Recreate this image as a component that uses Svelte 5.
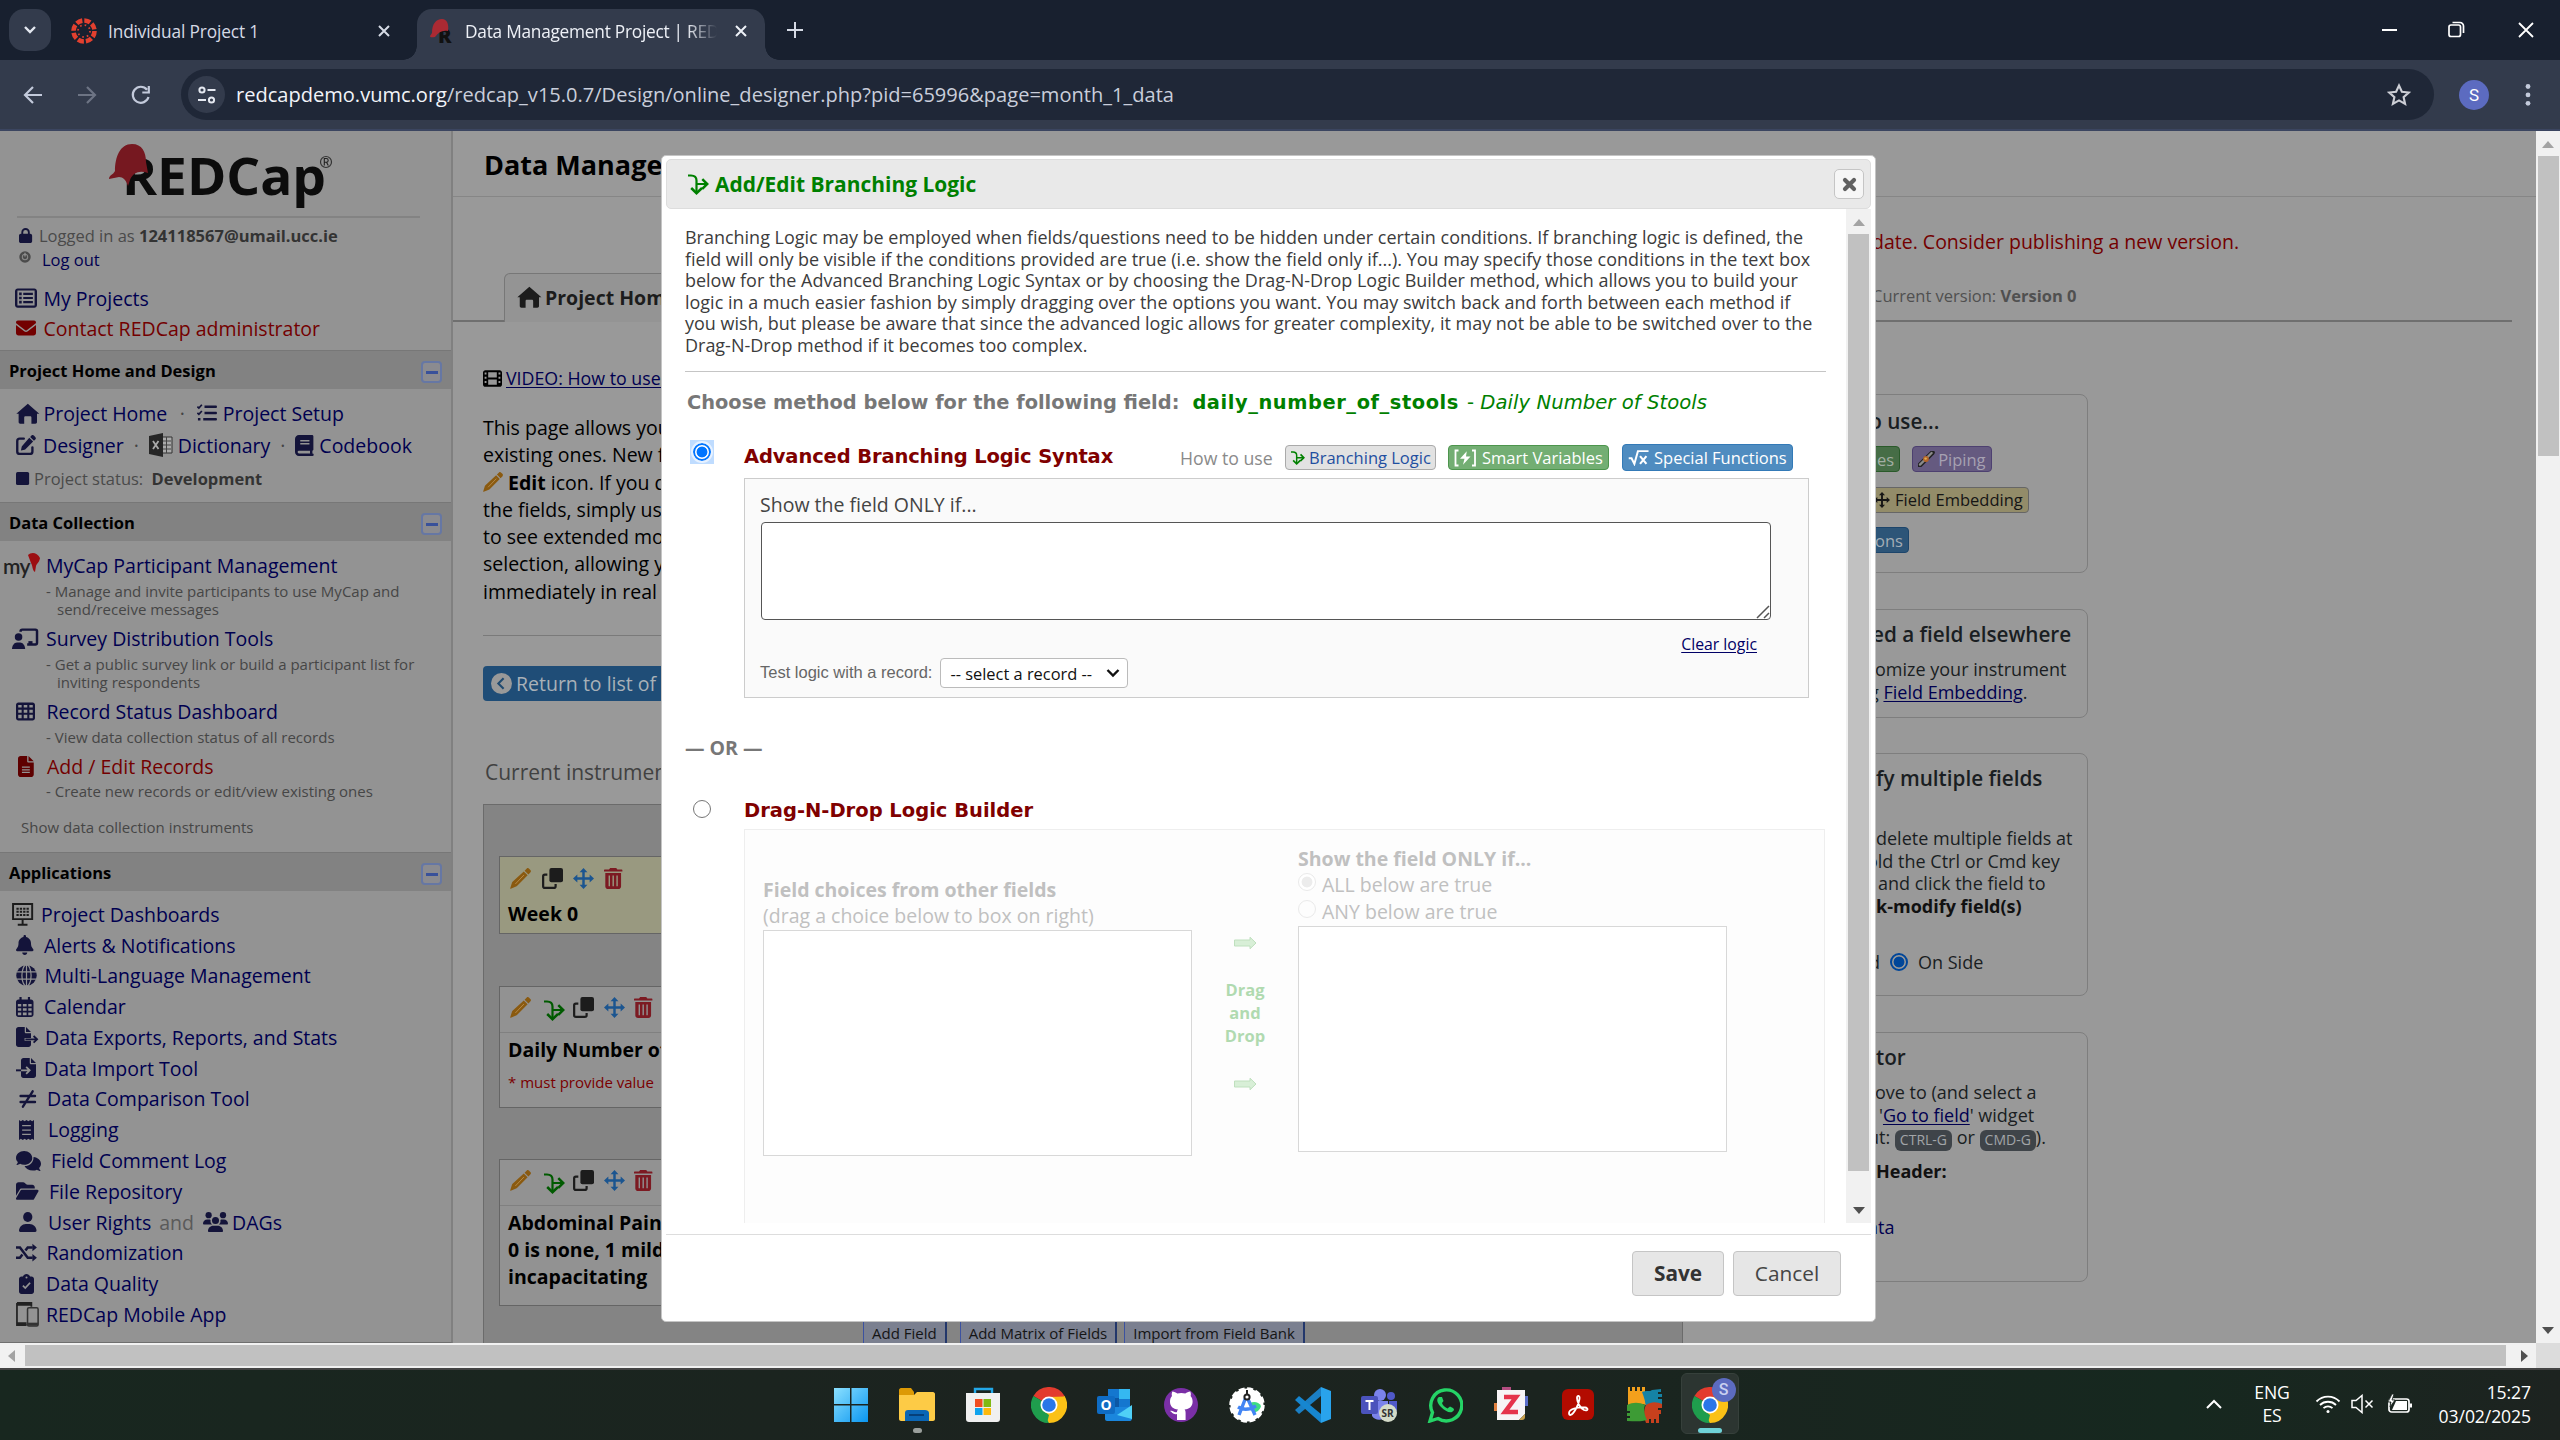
<script lang="ts">
  type Icon = [string, string];
  const icons: Record<string, Icon> = {
    home: ['0 0 576 512', '<path d="M288 16 8 262h56v202c0 22 16 40 40 40h96V352c0-18 12-30 30-30h116c18 0 30 12 30 30v152h96c24 0 40-18 40-40V262h56z"/>'],
    lock: ['0 0 448 512', '<path d="M80 192v-48a144 144 0 0 1 288 0v48h16c35 0 64 29 64 64v192c0 35-29 64-64 64H64c-35 0-64-29-64-64V256c0-35 29-64 64-64zm64 0h160v-48a80 80 0 0 0-160 0z"/>'],
    power: ['0 0 20 20', '<circle cx="10" cy="10" r="9.500" fill="#4b4b4b"/><circle cx="10" cy="10" r="4.500" fill="none" stroke="#888" stroke-width="1.800"/><path d="M9 3h2v6H9z" fill="#999"/>'],
    list: ['0 0 512 512', '<path fill-rule="evenodd" d="M64 32h384c35 0 64 29 64 64v320c0 35-29 64-64 64H64c-35 0-64-29-64-64V96c0-35 29-64 64-64zm-8 48v352h400V80zM96 130h60v60H96zm0 96h60v60H96zm0 96h60v60H96zm96-186h224v48H192zm0 96h224v48H192zm0 96h224v48H192z"/>'],
    mail: ['0 0 512 512', '<path d="M48 64h416c26 0 48 22 48 48 0 16-8 30-20 38L276 314c-12 9-28 9-40 0L20 150C8 142 0 128 0 112c0-26 22-48 48-48zM0 180l218 164c22 16 54 16 76 0l218-164v204c0 35-29 64-64 64H64c-35 0-64-29-64-64z"/>'],
    checks: ['0 0 512 512', '<path d="M192 64h288c18 0 32 14 32 32s-14 32-32 32H192zm0 160h288c18 0 32 14 32 32s-14 32-32 32H192zm-32 160h320c18 0 32 14 32 32s-14 32-32 32H160zM24 384h64v64H24z"/><path d="m10 92 38 38 76-86M10 252l38 38 76-86" fill="none" stroke="currentColor" stroke-width="44"/>'],
    edit: ['0 0 512 512', '<path d="M362 48 402 8c20-14 42-8 62 12l28 28c20 20 22 44 8 62l-40 38zM340 70l98 98-190 190c-8 8-18 14-30 17l-92 20 20-92c3-12 9-22 17-30z"/><path d="M200 92H96c-36 0-64 28-64 64v264c0 36 28 64 64 64h260c36 0 64-28 64-64V316" fill="none" stroke="currentColor" stroke-width="60" stroke-linecap="round"/>'],
    excel: ['0 0 24 24', '<path d="M12 4h11v16H12z" fill="#aaa" stroke="#333" stroke-width="1"/><path d="M13 8h9M13 12h9M13 16h9M17.500 4v16" stroke="#444" stroke-width="1"/><path d="M0 3 14 0v24L0 21z" fill="#262626"/><path d="m4 8 5.500 8M9.500 8 4 16" stroke="#aaa" stroke-width="1.800"/>'],
    book: ['0 0 448 512', '<path fill-rule="evenodd" d="M96 0h320c18 0 32 14 32 32v320c0 14-10 28-24 32v64a32 32 0 0 1 0 64H96c-53 0-96-43-96-96V96C0 43 43 0 96 0zm0 384a32 32 0 0 0 0 64h270v-64zM128 120v36h224v-36zm0 76v36h224v-36z"/>'],
    square: ['0 0 448 512', '<rect y="32" width="448" height="448" rx="56"/>'],
    teach: ['0 0 640 512', '<circle cx="160" cy="220" r="92"/><path d="M0 512c0-90 60-160 120-160h80c60 0 120 70 120 160z"/><path d="M210 90V80c0-22 18-40 40-40h320c22 0 40 18 40 40v280c0 22-18 40-40 40H370" fill="none" stroke="currentColor" stroke-width="60"/><path d="M400 320h100v70H400z"/>'],
    table: ['0 0 512 512', '<path fill-rule="evenodd" d="M64 16h384c35 0 64 29 64 64v352c0 35-29 64-64 64H64c-35 0-64-29-64-64V80c0-35 29-64 64-64zM60 84v66h92V84zm148 0v66h96V84zm152 0v66h92V84zM60 206v84h92v-84zm148 0v84h96v-84zm152 0v84h92v-84zM60 346v90h92v-90zm148 0v90h96v-90zm152 0v90h92v-90z"/>'],
    file: ['0 0 384 512', '<path fill-rule="evenodd" d="M64 0h160v128c0 18 14 32 32 32h128v288c0 35-29 64-64 64H64c-35 0-64-29-64-64V64C0 29 29 0 64 0zm192 0 128 128H256zM96 256v32h192v-32zm0 64v32h192v-32zm0 64v32h192v-32z"/>'],
    board: ['0 0 24 26', '<path fill="none" stroke="#1c1c1c" stroke-width="2.200" d="M1.200 1.200h21.600v17H1.200zM12 18v6M6.500 24.500h11"/><path d="M5 6.500h14M5 10h14M5 13.500h14" stroke="#1c1c1c" stroke-width="2.200" stroke-dasharray="2.600 1.200"/>'],
    bell: ['0 0 448 512', '<path d="M224 0c-18 0-32 14-32 32v19C119 66 64 130 64 208v19c0 47-17 92-48 127l-8 9c-8 9-10 22-5 33s16 21 29 21h384c13 0 24-10 29-21s3-24-5-33l-8-9c-31-35-48-80-48-127v-19c0-78-55-142-128-157V32c0-18-14-32-32-32zm45 493c12-12 19-28 19-45H160c0 17 7 33 19 45s28 19 45 19 33-7 45-19z"/>'],
    globe: ['0 0 512 512', '<circle cx="256" cy="256" r="250"/><path d="M0 170h512M0 342h512M256 0v512" fill="none" stroke="#939393" stroke-width="30"/><ellipse cx="256" cy="256" rx="112" ry="262" fill="none" stroke="#939393" stroke-width="30"/>'],
    cal: ['0 0 448 512', '<path fill-rule="evenodd" d="M88 0h56v64h160V0h56v64h24c35 0 64 29 64 64v320c0 35-29 64-64 64H64c-35 0-64-29-64-64V128c0-35 29-64 64-64h24zM48 180v66h86v-66zm128 0v66h96v-66zm138 0v66h86v-66zM48 288v66h86v-66zm128 0v66h96v-66zm138 0v66h86v-66zM48 396v68h86v-68zm128 0v68h96v-68zm138 0v68h86v-68z"/>'],
    exp: ['0 0 576 512', '<path d="M64 0h160v128c0 18 14 32 32 32h128v120H220v72h164v96c0 35-29 64-64 64H64c-35 0-64-29-64-64V64C0 29 29 0 64 0zm192 0 128 128H256z"/><path d="M240 316h290M450 230l90 86-90 86" fill="none" stroke="currentColor" stroke-width="46"/>'],
    imp: ['0 0 512 512', '<path d="M192 0h160v128c0 18 14 32 32 32h128v288c0 35-29 64-64 64H192c-35 0-64-29-64-64V64c0-35 29-64 64-64zm192 0 128 128H384z"/><path d="M0 316h130" stroke="currentColor" stroke-width="50"/><path d="M130 316h200M260 226l90 90-90 90" fill="none" stroke="#939393" stroke-width="46"/>'],
    neq: ['0 0 448 512', '<path d="M40 180h370M40 332h370M350 60 100 452" fill="none" stroke="currentColor" stroke-width="60" stroke-linecap="round"/>'],
    receipt: ['0 0 384 512', '<path fill-rule="evenodd" d="m0 0 48 34L96 0l48 34 48-34 48 34 48-34 48 34 48-34v512l-48-34-48 34-48-34-48 34-48-34-48 34-48-34-48 34zM80 130v32h224v-32zm0 110v32h224v-32zm0 110v32h224v-32z"/>'],
    chat: ['0 0 640 512', '<path d="M208 0c115 0 208 79 208 176S323 352 208 352c-38 0-74-9-105-24-20 14-58 32-98 32 20-20 38-52 43-78C18 252 0 216 0 176 0 79 93 0 208 0z"/><path d="M448 176c0 112-98 204-230 208 30 70 110 118 214 118 38 0 74-9 105-24 20 14 58 32 98 32-20-20-38-52-43-78 30-30 48-66 48-106 0-90-82-164-190-174 -1 8-2 16-2 24z"/>'],
    folder: ['0 0 576 512', '<path d="M90 230 0 380V96c0-35 29-64 64-64h118c17 0 33 7 45 19l26 26c12 12 28 19 45 19h118c35 0 64 29 64 64v32H144c-22 0-43 12-54 38zM120 236c6-8 14-14 24-14h400c12 0 22 6 28 16s6 22 0 32L460 464c-6 10-16 16-28 16H32c-12 0-22-6-28-16s-6-22 0-32z"/>'],
    user: ['0 0 448 512', '<ellipse cx="224" cy="128" rx="118" ry="128"/><path d="M178 304C80 304 0 384 0 482c0 16 14 30 30 30h388c16 0 30-14 30-30 0-98-80-178-178-178z"/>'],
    users: ['0 0 640 512', '<circle cx="144" cy="80" r="80"/><circle cx="512" cy="80" r="80"/><circle cx="320" cy="220" r="90"/><path d="M0 299c0-59 48-107 107-107h42c16 0 31 4 45 10-12 62 18 96 40 118H21c-12 0-21-9-21-21zM640 299c0-59-48-107-107-107h-42c-16 0-31 4-45 10 12 62-18 96-40 118h213c12 0 21-9 21-21zM128 485c0-74 60-133 133-133h118c74 0 133 60 133 133 0 15-12 27-27 27H155c-15 0-27-12-27-27z"/>'],
    shuffle: ['0 0 512 512', '<path d="M0 132h96l190 250h120M0 382h96l60-78M230 208l56-76h120" fill="none" stroke="currentColor" stroke-width="62"/><path d="m400 40 110 92-110 92zM400 290l110 92-110 92z"/>'],
    clip: ['0 0 384 512', '<path d="M192 0c-42 0-77 27-91 64H64c-35 0-64 29-64 64v320c0 35 29 64 64 64h256c35 0 64-29 64-64V128c0-35-29-64-64-64h-37C269 27 234 0 192 0z"/><circle cx="192" cy="92" r="26" fill="#939393"/><path d="m100 300 60 60 124-136" fill="none" stroke="#939393" stroke-width="46"/>'],
    mobile: ['0 0 24 26', '<path d="M1 1h15v4M1 1v23h10" fill="none" stroke="#222" stroke-width="1.800"/><path d="M1 2.500h15M1 22.500h10" stroke="#222" stroke-width="3"/><rect x="12" y="6" width="11" height="19" rx="1.500" fill="none" stroke="#333" stroke-width="1.600"/><path d="M12 23h11" stroke="#333" stroke-width="3"/>'],
    film: ['0 0 512 512', '<path fill-rule="evenodd" d="M64 32h384c35 0 64 29 64 64v320c0 35-29 64-64 64H64c-35 0-64-29-64-64V96c0-35 29-64 64-64zM44 96v54h50V96zm0 112v54h50v-54zm0 116v54h50v-54zm374-228v54h50V96zm0 112v54h50v-54zm0 116v54h50v-54zM140 90v138h232V90zm0 190v142h232V280z"/>'],
    pencil: ['0 0 512 512', '<path d="M410 10c20-14 42-8 56 6l30 30c16 16 20 40 4 60l-50 52-94-94zM336 84l94 94-260 262c-6 6-14 12-22 14L18 506c-10 2-16-4-12-14l42-132c2-8 8-16 14-22z"/><path d="M130 390 340 170" stroke="#b98d4d" stroke-width="22"/>'],
    copy: ['0 0 512 512', '<rect x="180" width="332" height="350" rx="50"/><path d="M130 160H70c-24 0-42 18-42 42v240c0 24 18 42 42 42h220c24 0 42-18 42-42v-50" fill="none" stroke="currentColor" stroke-width="54"/>'],
    move: ['0 0 512 512', '<path d="m256 0 96 106h-66v120h120v-66l106 96-106 96v-66H286v120h66l-96 106-96-106h66V286H106v66L0 256l106-96v66h120V106h-66z"/>'],
    trash: ['0 0 448 512', '<path fill-rule="evenodd" d="M150 0h148l28 34h106c9 0 16 8 16 16v36H0V50c0-8 7-16 16-16h106zM32 120h384v328c0 35-29 64-64 64H96c-35 0-64-29-64-64zm80 62v264h34V182zm95 0v264h34V182zm95 0v264h34V182z"/>'],
    branch: ['0 0 21 21', '<path d="M0 1.500h3c4 0 5.500 2 5.500 5V18M8.500 10H19" fill="none" stroke="currentColor" stroke-width="2.200"/><path d="m3.200 14 5.300 5.200 5.500-5.200M14.300 5.200 19.200 10l-4.900 4.800" fill="none" stroke="currentColor" stroke-width="2.500"/>'],
    bolt: ['0 0 30 24', '<path d="M6 2H2v20h4M24 2h4v20h-4" fill="none" stroke="currentColor" stroke-width="2.400"/><path d="M17 3 8 13h6l-2 8 10-11h-6z"/>'],
    root: ['0 0 30 24', '<path d="M1 13h4l4 8L14 3h15" fill="none" stroke="currentColor" stroke-width="2.800"/><path d="m17 10 9 11M26 10l-9 11" stroke="currentColor" stroke-width="3"/>'],
    pipe: ['0 0 20 20', '<path d="M2 18 18 2" stroke="#222" stroke-width="6" stroke-linecap="round"/><path d="M2.500 17 17 2.500" stroke="#8a8a8a" stroke-width="3" stroke-linecap="round"/><circle cx="10" cy="10" r="3.600" fill="#b5652a"/><circle cx="9.500" cy="9.500" r="1.500" fill="#e0b050"/>'],
    chev: ['0 0 20 20', '<circle cx="10" cy="10" r="10" fill="#999"/><path d="m12 5-5 5 5 5" fill="none" stroke="#1f4a70" stroke-width="2"/>'],
  };

  const apps: { t: string; i: string; h: number; w: number; cls?: string }[] = [
    { t: 'Project Dashboards', i: 'board', h: 23, w: 29, cls: 'out' },
    { t: 'Alerts & Notifications', i: 'bell', h: 20, w: 28 },
    { t: 'Multi-Language Management', i: 'globe', h: 21, w: 28.5 },
    { t: 'Calendar', i: 'cal', h: 20, w: 28 },
    { t: 'Data Exports, Reports, and Stats', i: 'exp', h: 20, w: 29 },
    { t: 'Data Import Tool', i: 'imp', h: 20, w: 28 },
    { t: 'Data Comparison Tool', i: 'neq', h: 20, w: 28, cls: 'in' },
    { t: 'Logging', i: 'receipt', h: 20, w: 29, cls: 'in' },
    { t: 'Field Comment Log', i: 'chat', h: 20, w: 35 },
    { t: 'File Repository', i: 'folder', h: 20, w: 33 },
    { t: 'User Rights', i: 'user', h: 20, w: 29, cls: 'in' },
    { t: 'Randomization', i: 'shuffle', h: 21, w: 30.5 },
    { t: 'Data Quality', i: 'clip', h: 20, w: 27, cls: 'in' },
    { t: 'REDCap Mobile App', i: 'mobile', h: 25, w: 30 },
  ];
</script>

{#snippet icon(name: string, h: number, w: number)}
  <svg class="ic {name}" width={w} height={h} viewBox={icons[name][0]} preserveAspectRatio="xMinYMid meet" fill="currentColor">{@html icons[name][1]}</svg>
{/snippet}

{#snippet chrome()}
  <svg viewBox="0 0 36 36" width="36" height="36">
    <path d="M18 18 2.400 9A18 18 0 0 1 33.600 9z" fill="#e33b2e" />
    <path d="M18 18 33.600 9A18 18 0 0 1 18 36z" fill="#fbc116" />
    <path d="M18 18v18A18 18 0 0 1 2.400 9z" fill="#1f9d4d" />
    <path d="M18 9.500h15.800L25.500 22z" fill="#fbc116" /><path d="M2.400 9H33.600L18 10z" fill="#e33b2e" />
    <path d="M10.500 22.500 18 36l7.500-13.500z" fill="#fbc116" /><path d="M3 9.500 10.500 22.500 18 28l-2 8A18 18 0 0 1 3 9.500z" fill="#1f9d4d" />
    <circle cx="18" cy="18" r="8.500" fill="#fff" /><circle cx="18" cy="18" r="6.800" fill="#2a76e8" />
  </svg>
{/snippet}

{#snippet arrow()}
  <svg width="23" height="14" viewBox="0 0 23 14"><path d="M.5 4h15.500V1.200L22 7l-6 5.800V10H.5z" fill="#d8efd7" stroke="#bfe0be" stroke-width="1" /></svg>
{/snippet}

{#snippet tools(branch: boolean)}
  <div class="tools">
    <span class="amber">{@render icon('pencil', 21, 32)}</span>
    {#if branch}<span class="green">{@render icon('branch', 21, 31)}</span>{/if}
    <span class="ink">{@render icon('copy', 21, 31)}</span>
    <span class="blue">{@render icon('move', 21, 30.5)}</span>
    <span class="red">{@render icon('trash', 21, 20)}</span>
  </div>
{/snippet}

<div class="screen">
  <header class="tabs">
    <div class="drop"><svg width="16" height="12" viewBox="0 0 16 12"><path d="m3 3 5 5 5-5" fill="none" stroke="#e4e8f0" stroke-width="2.400" /></svg></div>
    <div class="tab idle">
      <svg class="fav" width="26" height="26" viewBox="0 0 26 26"><circle cx="13" cy="13" r="10.500" fill="none" stroke="#e3402f" stroke-width="4.600" stroke-dasharray="6.200 2.050" /><circle cx="13" cy="13" r="6" fill="none" stroke="#e3402f" stroke-width="1.800" stroke-dasharray="1.600 3.110" /></svg>
      <span class="tt">Individual Project 1</span>
      <svg class="x" width="14" height="14" viewBox="0 0 14 14"><path d="m2 2 10 10M12 2 2 12" stroke="#d5dae5" stroke-width="2" /></svg>
    </div>
    <div class="tab active">
      <svg class="fav" width="26" height="26" viewBox="0 0 26 26"><text x="9" y="25" font-family="Open Sans, sans-serif" font-weight="800" font-size="20" fill="#111">R</text><path d="M3 15C3 6 7 1 13 1c5 0 7 5 6 12-6-1-9 1-13 6-2 0-5 1-5-1z" fill="#ab2a33" /></svg>
      <span class="tt fade">Data Management Project | RED</span>
      <svg class="x" width="14" height="14" viewBox="0 0 14 14"><path d="m2 2 10 10M12 2 2 12" stroke="#eef1f7" stroke-width="2" /></svg>
    </div>
    <svg class="plus" width="18" height="18" viewBox="0 0 18 18"><path d="M9 1v16M1 9h16" stroke="#d5dae5" stroke-width="2" /></svg>
    <div class="win">
      <svg class="min" width="16" height="16" viewBox="0 0 16 16"><path d="M0 8h15" stroke="#fff" stroke-width="2" /></svg>
      <svg width="17" height="17" viewBox="0 0 17 17" fill="none" stroke="#fff" stroke-width="1.700"><rect x="1" y="4" width="11.500" height="11.500" rx="2" /><path d="M4.500 1.500H12a3.500 3.500 0 0 1 3.500 3.500v7" /></svg>
      <svg width="16" height="16" viewBox="0 0 16 16"><path d="m1 1 14 14M15 1 1 15" stroke="#fff" stroke-width="1.800" /></svg>
    </div>
  </header>

  <div class="toolbar">
    <svg class="nav" width="20" height="20" viewBox="0 0 20 20" fill="none" stroke="#c3cadb" stroke-width="2.200"><path d="M19 10H2M10 2l-8 8 8 8" /></svg>
    <svg class="nav" width="20" height="20" viewBox="0 0 20 20" fill="none" stroke="#6d7484" stroke-width="2.200"><path d="M1 10h17M10 2l8 8-8 8" /></svg>
    <svg class="nav" width="20" height="20" viewBox="0 0 20 20" fill="none" stroke="#c3cadb" stroke-width="2.200"><path d="M17.500 12A8 8 0 1 1 16 4.700M17.800 1v6.500h-6.500" /></svg>
    <div class="omni">
      <div class="site"><svg width="20" height="20" viewBox="0 0 20 20" fill="none" stroke="#e4e8f0" stroke-width="2"><circle cx="5" cy="5" r="2.600" /><path d="M10.500 5h8M1 15h8" /><circle cx="14.500" cy="15" r="2.600" /></svg></div>
      <div class="url"><b>redcapdemo.vumc.org</b>/redcap_v15.0.7/Design/online_designer.php?pid=65996&amp;page=month_1_data</div>
      <svg class="star" width="24" height="24" viewBox="0 0 24 24"><path d="m12 2.500 2.900 6.300 6.900.7-5.200 4.600 1.500 6.800-6.100-3.500-6.100 3.500 1.500-6.800L2.200 9.500l6.900-.7z" fill="none" stroke="#cdcfd6" stroke-width="2.100" /></svg>
    </div>
    <div class="avatar">S</div>
    <svg class="dots" width="6" height="24" viewBox="0 0 6 24" fill="#c3cadb"><circle cx="3" cy="3.500" r="2.400" /><circle cx="3" cy="11.900" r="2.400" /><circle cx="3" cy="20.300" r="2.400" /></svg>
  </div>

  <div class="view">
    <aside>
      <div class="logo">
        <svg width="236" height="86" viewBox="0 0 236 86">
          <text x="23" y="64" font-family="Open Sans, sans-serif" font-weight="700" font-size="52.500" textLength="204" lengthAdjust="spacingAndGlyphs" fill="#0c0c0c">REDCap</text>
          <path d="M16 40C16 26 21 13 33 13c10 0 14 8 14 18l2 11c-8-3-15-1-18 7l-2 6c-2-6-5-9-9-9l-10 2c0-4 4-4 6-8z" fill="#761820" />
          <circle cx="227" cy="31" r="5.500" fill="none" stroke="#333" stroke-width="1.200" /><path d="M225.300 34.500v-7h2a1.900 1.900 0 0 1 0 3.800h-2m2.200 0 1.800 3.200" fill="none" stroke="#222" stroke-width="1.100" />
        </svg>
      </div>
      <div class="who"><span class="ic-navy">{@render icon('lock', 15, 20)}</span>Logged in as <b>124118567@umail.ucc.ie</b></div>
      <div class="logout">{@render icon('power', 12, 23)}<a>Log out</a></div>
      <div class="link first"><span class="navy">{@render icon('list', 22, 28.5)}</span>My Projects</div>
      <div class="link warn">{@render icon('mail', 20, 27.5)}Contact REDCap administrator</div>

      <div class="head one">Project Home and Design<i></i></div>
      <div class="line r1"><span class="navy">{@render icon('home', 21, 27.5)}</span>Project Home<u>·</u><span class="navy">{@render icon('checks', 20, 25.5)}</span>Project Setup</div>
      <div class="line r2"><span class="navy">{@render icon('edit', 20, 27)}</span>Designer<u>·</u>{@render icon('excel', 24, 29)}Dictionary<u>·</u><span class="navy">{@render icon('book', 21, 24)}</span>Codebook</div>
      <div class="status"><span class="navy">{@render icon('square', 15, 18)}</span>Project status: <b>Development</b></div>

      <div class="head two">Data Collection<i></i></div>
      <div class="big my"><em>my</em><svg width="12" height="20" viewBox="0 0 12 20"><path d="M0 2c3-3 9-3 12 3-1 5-3 5-4 8l-1 6C4 17 5 13 3 10z" fill="#9c0f12" /></svg>MyCap Participant Management</div>
      <p class="sub">- Manage and invite participants to use MyCap and<br />send/receive messages</p>
      <div class="big teachrow">{@render icon('teach', 21, 34)}Survey Distribution Tools</div>
      <p class="sub">- Get a public survey link or build a participant list for<br />inviting respondents</p>
      <div class="big">{@render icon('table', 19, 30.5)}Record Status Dashboard</div>
      <p class="sub">- View data collection status of all records</p>
      <div class="big warn">{@render icon('file', 21, 29)}Add / Edit Records</div>
      <p class="sub last">- Create new records or edit/view existing ones</p>
      <p class="show">Show data collection instruments</p>

      <div class="head three">Applications<i></i></div>
      <div class="apps">
        {#each apps as a}
          <div class="app {a.cls ?? ''}"><span class="navy">{@render icon(a.i, a.h, a.w)}</span>{a.t}{#if a.i === 'user'}<s>and</s><span class="navy">{@render icon('users', 20, 29)}</span>DAGs{/if}</div>
        {/each}
      </div>
    </aside>

    <main>
      <div class="phead">Data Management Project</div>
      <div class="tabline">
        <div class="ptab">{@render icon('home', 22, 28)}Project Home</div>
      </div>
      <div class="cols">
        <div class="left">
          <div class="video">{@render icon('film', 19, 23)}<a>VIDEO: How to use this page</a></div>
          <p class="intro">This page allows you to build<br />existing ones. New fields may<br /><span class="amber">{@render icon('pencil', 20, 25)}</span><b>Edit</b> icon. If you decide<br />the fields, simply use it<br />to see extended modes<br />selection, allowing you<br />immediately in real time</p>
          <div class="back">{@render icon('chev', 21, 25)}Return to list of instruments</div>
          <h4>Current instrument:</h4>
          <div class="panel">
            <div class="fcard yellow">{@render tools(false)}<b>Week 0</b></div>
            <div class="fcard two">{@render tools(true)}<b>Daily Number of Stools</b><small>* must provide value</small></div>
            <div class="fcard three">{@render tools(true)}<b>Abdominal Pain Score<br />0 is none, 1 mild and 3 is<br />incapacitating</b></div>
            <div class="adds"><span>Add Field</span><span>Add Matrix of Fields</span><span>Import from Field Bank</span></div>
          </div>
        </div>
        <div class="right">
          <p class="stale">date. Consider publishing a new version.</p>
          <p class="ver">Current version: <b>Version 0</b></p>
          <section class="c1">
            <h3>to use...</h3>
            <div class="bl"><span class="bg g">es</span><span class="bg p">{@render icon('pipe', 16, 20)}Piping</span></div>
            <div class="bl"><span class="bg y">{@render icon('move', 16, 21)}Field Embedding</span></div>
            <div class="bl"><span class="bg b">ons</span></div>
          </section>
          <section class="c2"><h3>ed a field elsewhere</h3><p>omize your instrument<br /><span class="pull">g <a>Field Embedding</a>.</span></p></section>
          <section class="c3"><h3>fy multiple fields</h3><p>delete multiple fields at<br /><span class="pull9">old the Ctrl or Cmd key</span><br /><span class="nudge">and click the field to</span><br /><b>k-modify field(s)</b></p>
            <div class="pos"><span>d</span><span class="radio dark"></span>On Side</div></section>
          <section class="c4"><h3>tor</h3><p>ove to (and select a<br /><span class="nudge2">'<a>Go to field</a>' widget</span><br /><span class="pull8">ut: <kbd>CTRL-G</kbd> or <kbd>CMD-G</kbd>).</span></p><p class="hd"><b>Header:</b></p><p class="ata">ata</p></section>
        </div>
      </div>
    </main>
    <div class="vbar"><span class="up"></span><span class="thumb"></span><span class="down"></span></div>
  </div>
  <div class="hbar"><span class="la"></span><span class="thumb"></span><span class="ra"></span><span class="corner"></span></div>

  <footer>
    <div class="icons">
      <div><svg width="36" height="36" viewBox="0 0 36 36"><defs><linearGradient id="w" x1="0" y1="0" x2="1" y2="1"><stop offset="0" stop-color="#8be0ff" /><stop offset="1" stop-color="#0a96f0" /></linearGradient></defs><path d="M1 1h16v16H1zM18.500 1H35v16H18.500zM1 18.500h16V35H1zM18.500 18.500H35V35H18.500z" fill="url(#w)" /></svg></div>
      <div class="run"><svg width="36" height="36" viewBox="0 0 36 36"><path d="M0 3c0-1 1-2 2-2h10l3 4v6H0z" fill="#dd9a05" /><path d="M0 8h15l3-3h16c1 0 2 1 2 2v25c0 1-1 2-2 2H2c-1 0-2-1-2-2z" fill="#fdcb46" /><path d="M6 34V26c0-2 1-3 3-3h17c2 0 4 1 4 3v8z" fill="#0b66b5" /><path d="M10 28h15" stroke="#06407a" stroke-width="2" /></svg></div>
      <div><svg width="36" height="36" viewBox="0 0 36 36"><path d="M10 8V2h17v6" fill="none" stroke="#23a8e8" stroke-width="2.400" /><path d="M1 6h34v26c0 2-1 3-3 3H4c-2 0-3-1-3-3z" fill="#f0f0f0" /><path d="M10 12h7.500v8H10z" fill="#f04e23" /><path d="M18.500 12H26v8h-7.500z" fill="#80b913" /><path d="M10 21h7.500v7H10z" fill="#10a3ee" /><path d="M18.500 21H26v7h-7.500z" fill="#fdb90d" /></svg></div>
      <div>{@render chrome()}</div>
      <div><svg width="36" height="36" viewBox="0 0 36 36"><path d="M11 2h22v26H11z" fill="#1477cf" /><path d="M22 2h11v10H22z" fill="#35b8f1" /><path d="M11 11h11v10H11z" fill="#0c57a5" /><path d="M8 20h27v11c0 2-1 3-2 3H10c-1 0-2-1-2-2z" fill="#1a86dd" /><path d="m20 28 15-10v14z" fill="#4fd0f7" /><rect y="9" width="18" height="18" rx="2" fill="#0f6cc4" /><text x="3.500" y="23" font-family="Open Sans, sans-serif" font-weight="700" font-size="14" fill="#fff">O</text></svg></div>
      <div><svg width="36" height="36" viewBox="0 0 36 36"><circle cx="18" cy="18" r="17" fill="#7a2fa6" /><path d="M14 33v-6c-4 1-5-2-7-3 3-1 4 2 7 1 0-1 .5-2 1-2.500-5-.6-8-3-8-8 0-2 .6-4 2-5.500-.5-1.500-.3-3 .3-4.500 2 0 3.500 1 5 2a15 15 0 0 1 8 0c1.500-1 3-2 5-2 .6 1.500.8 3 .3 4.500 1.400 1.500 2 3.500 2 5.500 0 5-3 7.400-8 8 .8.800 1 2 1 3.500V33z" fill="#fff" /></svg></div>
      <div><svg width="36" height="36" viewBox="0 0 36 36"><circle cx="18" cy="18" r="16.500" fill="#fff" stroke="#fff" stroke-width="2.500" stroke-dasharray="6 2.600" /><path d="M21 16c4-2 9-1 11 3-1 4-4 6-8 7z" fill="#3ddc84" /><path d="M17 10 10 28M18 10l8 18M9 20q8 5 18-1" fill="none" stroke="#4285f4" stroke-width="3.400" /><circle cx="18" cy="10" r="2.600" fill="#fff" stroke="#222" stroke-width="2" /><path d="M18 3v5" stroke="#222" stroke-width="2" /></svg></div>
      <div><svg width="36" height="36" viewBox="0 0 36 36"><path d="M26 0 36 4v28l-10 4z" fill="#29a3ec" /><path d="M26 0v9L4 27l-4-4z" fill="#1b7fc4" /><path d="M26 36v-9L4 9l-4 4z" fill="#1686d0" /></svg></div>
      <div><svg width="36" height="36" viewBox="0 0 36 36"><circle cx="19" cy="8" r="6" fill="#7b83eb" /><circle cx="30" cy="9" r="4" fill="#5059c9" /><path d="M11 14h16v12a9 9 0 0 1-16 3z" fill="#7b83eb" /><path d="M28 14h8v9a6 6 0 0 1-8 3z" fill="#5059c9" /><rect y="9" width="17" height="18" rx="2" fill="#4b53bc" /><path d="M4.500 14h8M8.500 14v9" stroke="#fff" stroke-width="2" /><circle cx="27" cy="26" r="9" fill="#d4dbc8" /><text x="20.500" y="30" font-family="Open Sans, sans-serif" font-weight="700" font-size="10" fill="#333">SR</text></svg></div>
      <div><svg width="36" height="36" viewBox="0 0 36 36"><path d="M3 34 5.500 25.500A15.500 15.500 0 1 1 11 31.500z" fill="none" stroke="#25d366" stroke-width="3.400" /><path d="M12 10c-3 2-2 6 2 10s8 6 11 5c3-2 2-3 1-4l-3-1.500-2.500 2c-3-1.500-5-3.500-5.500-5.500l1.500-2L15 10z" fill="#25d366" /></svg></div>
      <div><svg width="36" height="36" viewBox="0 0 36 36"><path d="M9 0h9v6H9z" fill="#b34d80" /><path d="M30 9h5v10h-5z" fill="#5b6ec8" /><path d="M1 16h5v8H1z" fill="#e08040" /><path d="M4 3h28v24l-6 6H4z" fill="#f7f4f6" /><path d="m26 33 6-6v3c0 2-1 3-3 3z" fill="#c9a04c" /><path d="M11 10h12L12 25h13" fill="none" stroke="#e5344c" stroke-width="4.600" /></svg></div>
      <div><svg width="36" height="36" viewBox="0 0 36 36"><rect x="2" y="2" width="32" height="31" rx="6" fill="#b30b00" /><path d="M9 26c0-4 8-6 16-5.500 4 .5 3 4-1 2.500-4-2-7-8-7-12 0-3 3-3 2.500 1C19 17 14 27 10.500 28 9 28 9 27 9 26z" fill="none" stroke="#fff" stroke-width="1.800" /></svg></div>
      <div><svg width="36" height="36" viewBox="0 0 36 36"><path d="M2 0h2v4h2V0h3v4h2V0h3v4h2V0h3v6l1 12c-6-2-13-1-18 4z" fill="#f3a01c" /><path d="M16 5c4-2 8 0 10-2l9-1v3h-3v2h4v3h-4v2h4v6c-6-3-12-1-16 4 0-6-2-12-4-17z" fill="#1583a5" /><path d="M20 18c6-4 11-3 16-1v4h-4v2h3v4h-2v9h-3v-4h-2v4h-3v-4h-2v4h-3c-2-6-3-12 0-18z" fill="#c8401d" /><path d="M1 18c6-3 12-3 18 0-2 5 0 11 2 15-6 2-13 1-20 1v-3h3v-2H1v-3h3v-2H1z" fill="#3d9b35" /></svg></div>
      <div class="cur">{@render chrome()}<span class="badge">S</span></div>
    </div>
    <div class="tray">
      <svg width="18" height="12" viewBox="0 0 18 12"><path d="m2 10 7-7 7 7" fill="none" stroke="#fff" stroke-width="2" /></svg>
      <div class="lang">ENG<br />ES</div>
      <svg class="wifi" width="26" height="20" viewBox="0 0 26 20" fill="none" stroke="#fff" stroke-width="1.800"><path d="M1.500 7.500a16 16 0 0 1 23 0M5 11a11.500 11.500 0 0 1 16 0M8.500 14.200a6.500 6.500 0 0 1 9 0" /><circle cx="13" cy="17.500" r="1.500" fill="#fff" stroke="none" /></svg>
      <svg class="vol" width="24" height="20" viewBox="0 0 24 20" fill="none" stroke="#fff" stroke-width="1.500"><path d="M1 6.500h4L11 1.500v17L5 13.500H1zM14.500 6.500l7 7M21.500 6.500l-7 7" /></svg>
      <svg width="26" height="20" viewBox="0 0 26 20"><rect x="2" y="5" width="20" height="13" rx="2.500" fill="none" stroke="#fff" stroke-width="1.700" /><path d="M9 7h11v9H5z" fill="#fff" /><path d="M22.500 9.500H25v4h-2.500z" fill="#fff" /><path d="M5 0 1 8h3l-1 5 5-7H5l2-6z" fill="#fff" stroke="#1b241f" stroke-width=".8" /></svg>
      <div class="clock">15:27<br />03/02/2025</div>
    </div>
  </footer>

  <div class="dialog">
    <div class="title"><span class="green">{@render icon('branch', 21, 27)}</span>Add/Edit Branching Logic
      <div class="close"><svg width="15" height="15" viewBox="0 0 15 15"><path d="m3 3 9 9M12 3l-9 9" stroke="#606060" stroke-width="4.200" stroke-linecap="round" /></svg></div></div>
    <div class="scroll">
      <div class="body">
        <p class="desc">Branching Logic may be employed when fields/questions need to be hidden under certain conditions. If branching logic is defined, the<br />field will only be visible if the conditions provided are true (i.e. show the field only if...). You may specify those conditions in the text box<br />below for the Advanced Branching Logic Syntax or by choosing the Drag-N-Drop Logic Builder method, which allows you to build your<br />logic in a much easier fashion by simply dragging over the options you want. You may switch back and forth between each method if<br />you wish, but please be aware that since the advanced logic allows for greater complexity, it may not be able to be switched over to the<br />Drag-N-Drop method if it becomes too complex.</p>
        <div class="rule"></div>
        <div class="choose"><b>Choose method below for the following field:</b><b class="fld">daily_number_of_stools</b><span>- <i>Daily Number of Stools</i></span></div>
        <div class="method m1">
          <div class="pick"><span class="focus"><span class="radio"></span></span></div>
          <div class="col">
            <div class="mhead"><b>Advanced Branching Logic Syntax</b><span class="how">How to use</span>
              <span class="btn bgray"><span class="green">{@render icon('branch', 14, 18)}</span>Branching Logic</span>
              <span class="btn bgreen">{@render icon('bolt', 18, 28)}Smart Variables</span>
              <span class="btn bblue">{@render icon('root', 17, 26)}Special Functions</span></div>
            <div class="box">
              <div class="only">Show the field ONLY if...</div>
              <div class="area"><svg width="14" height="14" viewBox="0 0 14 14"><path d="M1 13 13 1M8 13l5-5" stroke="#555" stroke-width="1.500" /></svg></div>
              <div class="clear"><a>Clear logic</a></div>
              <div class="test">Test logic with a record:<div class="select">-- select a record --<svg width="14" height="10" viewBox="0 0 14 10"><path d="m1.500 2 5.500 5.500L12.500 2" fill="none" stroke="#111" stroke-width="2.400" /></svg></div></div>
            </div>
          </div>
        </div>
        <div class="or">— OR —</div>
        <div class="method m2">
          <div class="pick"><span class="radio off"></span></div>
          <div class="col">
            <div class="mhead"><b>Drag-N-Drop Logic Builder</b></div>
            <div class="box2">
              <div class="ch"><b>Field choices from other fields</b><span>(drag a choice below to box on right)</span><div class="drop2"></div></div>
              <div class="mid">{@render arrow()}<b>Drag<br />and<br />Drop</b>{@render arrow()}</div>
              <div class="rt"><b>Show the field ONLY if...</b><span><i class="r on"></i>ALL below are true</span><span><i class="r"></i>ANY below are true</span><div class="drop2"></div></div>
            </div>
          </div>
        </div>
      </div>
      <div class="dbar"><span class="up"></span><span class="thumb"></span><span class="down"></span></div>
    </div>
    <div class="foot"><span class="save">Save</span><span>Cancel</span></div>
  </div>
</div>

<style>
  :global(body) { margin: 0; background: #999; }
  * { box-sizing: border-box; }
  .screen { position: relative; width: 2560px; height: 1440px; overflow: hidden; display: flex; flex-direction: column; font-family: 'Open Sans', 'Noto Sans', sans-serif; font-size: 19.5px; color: #000; white-space: nowrap; }
  p, h3, h4 { margin: 0; font-weight: 400; }
  .ic { display: block; flex: none; }
  a { color: #000050; text-decoration: underline; text-underline-offset: 2px; text-decoration-thickness: 1px; }
  .navy, .ic-navy { color: #14143a; }
  .green { color: #008000; }

  .tabs { height: 60px; background: #18202f; display: flex; align-items: flex-start; flex: none; }
  .drop { width: 42px; height: 42px; margin: 9px 0 0 9px; border-radius: 15px; background: #333b4c; display: flex; align-items: center; justify-content: center; }
  .tab { height: 51px; margin-top: 9px; display: flex; align-items: center; padding-bottom: 7px; color: #d5dae5; font-size: 17.3px; letter-spacing: -.13px; }
  .idle { width: 366px; padding-left: 20px; }
  .active { position: relative; width: 348px; padding-left: 12px; background: #333b4c; border-radius: 15px 15px 0 0; color: #eef1f7; letter-spacing: -.25px; }
  .active::before, .active::after { content: ''; position: absolute; bottom: 0; width: 14px; height: 14px; background: radial-gradient(circle at 0 0, transparent 13.500px, #333b4c 14px); left: -14px; }
  .active::after { left: auto; right: -14px; background: radial-gradient(circle at 100% 0, transparent 13.500px, #333b4c 14px); }
  .fav { margin-right: 11px; }
  .idle .tt { flex: 1; }
  .idle .x { margin-right: 26px; }
  .fade { width: 252px; overflow: hidden; -webkit-mask-image: linear-gradient(90deg, #000 88%, transparent); }
  .active .x { margin-left: 17px; }
  .active .fav { margin-right: 10px; }
  .plus { margin: 21px 0 0 21px; }
  .win { margin: 21px 26px 0 auto; display: flex; gap: 53px; align-items: center; }
  .min { margin-right: -3px; }

  .toolbar { height: 71px; flex: none; background: #333b4c; display: flex; align-items: center; border-bottom: 2px solid #3b4560; }
  .nav { margin: 0 11px 0 23px; }
  .toolbar .nav + .nav { margin-left: 23px; }
  .omni { flex: 1; height: 51px; margin: 0 25px 0 19px; border-radius: 26px; background: #1f2737; display: flex; align-items: center; padding: 0 23px 0 7px; }
  .site { width: 37px; height: 37px; border-radius: 50%; background: #333b4c; display: flex; align-items: center; justify-content: center; }
  .url { margin-left: 11px; flex: 1; color: #c9cedb; font-size: 20.06px; }
  .url b { font-weight: 400; color: #f2f4f9; }
  .avatar { width: 30px; height: 30px; border-radius: 50%; background: #5c6bc0; color: #fff; font: 17px/30px Roboto, sans-serif; text-align: center; }
  .dots { margin: 0 29px 0 36px; }

  .view { height: 1212px; flex: none; display: flex; background: #999; overflow: hidden; }
  aside { width: 453px; flex: none; background: #939393; border-right: 2px solid #808080; border-bottom: 1px solid #6f6f6f; color: #000050; display: flex; flex-direction: column; }
  .logo { height: 87px; margin: 0 31px 0 17px; border-bottom: 2px solid #838383; padding-left: 82px; }
  .who { height: 24px; margin-top: 5px; padding-left: 19px; display: flex; align-items: center; font-size: 16.5px; color: #4a4a4a; white-space: pre; }
  .who b { color: #333; }
  .logout { height: 24px; padding-left: 19px; display: flex; align-items: center; font-size: 16.5px; }
  .logout a { text-decoration: none; }
  .logout .ic { margin-top: -5px; }
  .link { height: 30px; display: flex; align-items: center; padding-left: 15px; }
  .link.first { margin-top: 12px; }
  .link.warn { padding-left: 16px; }
  .warn { color: #730000; }
  .head { height: 39px; border-top: 1px solid #777; background: #828282; color: #000; font-weight: 700; font-size: 16.5px; display: flex; align-items: center; justify-content: space-between; padding: 0 9px 0 9px; }
  .head i { width: 21px; height: 22px; margin-top: 4px; border: 2px solid #6677a4; border-radius: 4px; background: linear-gradient(#39519a, #39519a) center/12px 3px no-repeat, #8b8b90; }
  .one { margin-top: 7px; }
  .line { height: 30px; display: flex; align-items: center; padding-left: 16px; }
  .line u { text-decoration: none; width: 30px; text-align: center; color: #444; }
  .r1 { margin-top: 9px; }
  .r2 { margin-top: 2px; }
  .line.r2 u { width: 25px; }
  .status { margin-top: 6px; height: 24px; display: flex; align-items: center; padding-left: 16px; font-size: 16.5px; color: #4a4a4a; white-space: pre; }
  .status b { color: #333; margin-left: 4px; }
  .two.head { margin-top: 12px; }
  .big { height: 30px; display: flex; align-items: center; padding-left: 16px; margin-top: 5px; }
  .big .ic { color: #14143a; }
  .big.warn { margin-top: 5px; padding-left: 18px; }
  .big.warn .ic { color: #5e0000; }
  .big.teachrow { padding-left: 12px; }
  .big.my { margin-top: 9px; padding-left: 3px; }
  .my em { font: 600 21px/1 Lato, sans-serif; color: #222; letter-spacing: -.6px; }
  .my svg { margin: -4px 6px 0 -2px; }
  .sub { margin-top: 2px; padding-left: 57px; text-indent: -11px; font-size: 15px; line-height: 18px; color: #464646; }
  .sub.last { margin-top: 1px; }
  .show { margin-top: 18px; padding-left: 21px; font-size: 15px; line-height: 18px; color: #464646; }
  .three.head { margin-top: auto; }
  .apps { height: 439px; padding-top: 8px; margin-bottom: 12px; }
  .app { height: 30.77px; display: flex; align-items: center; padding-left: 16px; }
  .app.out { padding-left: 12px; }
  .app.in { padding-left: 19px; }
  .app s { text-decoration: none; color: #5a5a5a; margin: 0 9px 0 8px; }

  main { width: 2083px; flex: none; overflow: hidden; }
  .phead { height: 66px; border-bottom: 1px solid #868686; padding-left: 31px; font: 700 27px/68px 'Open Sans', sans-serif; }
  .tabline { height: 125px; display: flex; align-items: flex-end; border-bottom: 2px solid #6f6f6f; margin-right: 24px; }
  .ptab { height: 49px; margin: 0 0 -2px 51px; width: 260px; border: 1px solid #777; border-bottom: 0; border-radius: 6px 6px 0 0; background: #949494; padding: 0 0 2px 12px; display: flex; align-items: center; font-weight: 700; color: #1c1c1c; }
  .cols { display: flex; padding-left: 30px; }
  .left { width: 1200px; flex: none; }
  .video { height: 26px; margin-top: 43px; display: flex; align-items: center; font-size: 17.8px; }
  .intro { margin-top: 23px; line-height: 27.3px; }
  .intro span { display: inline-block; vertical-align: -2px; }
  .amber { color: #8a5a10; }
  .back { position: relative; margin-top: 61px; width: 300px; height: 35px; border-radius: 4px; background: #1f4d77; color: #a9b1b8; display: flex; align-items: center; padding-left: 8px; }
  .back::before { content: ''; position: absolute; left: 0; top: -31px; width: 1100px; height: 1px; background: #7a7a7a; }
  h4 { margin-top: 55px; font-size: 21px; line-height: 32px; color: #414141; padding-left: 2px; }
  .panel { margin-top: 16px; height: 560px; background: #848484; border: 1px solid #6b6b6b; padding: 51px 15px 0; }
  .fcard { background: #929292; border: 1px solid #656565; padding-left: 8px; line-height: 27px; width: 1100px; }
  .fcard b { display: block; }
  .fcard small { display: block; font-size: 15px; line-height: 20px; margin-top: 9px; color: #7a0000; }
  .yellow { height: 78px; background: #999980; }
  .tools { display: flex; align-items: center; height: 46px; margin: 0 0 0 -8px; padding-left: 10px; }
  .yellow .tools { height: 43px; }
  .fcard.two { height: 122px; margin-top: 52px; }
  .fcard.two .tools, .fcard.three .tools { height: 46px; border-bottom: 1px solid #808080; padding-bottom: 4px; }
  .fcard.two > b, .fcard.three > b { margin-top: 3px; }
  .fcard.three { height: 147px; margin-top: 51px; }
  .tools .green { color: #005a00; padding: 5px 0 0 2px; margin-right: -2.5px; }
  .ink { color: #1c1c1c; }
  .tools .blue { color: #1b5590; }
  .tools .red { color: #7c1a22; }
  .adds { display: flex; margin: 14px 0 0 364px; }
  .adds span { height: 30px; padding: 2px 8px 0 8px; background: #7b8090; border-left: 1px solid #3c52a0; border-right: 2px solid #23376b; font-size: 15px; line-height: 23px; color: #151515; margin-right: 13px; }
  .adds span:nth-child(2) { margin-right: 7px; }

  .right { margin-top: -81px; flex: 1; padding-left: 188px; color: #1a1e22; font-size: 18px; }
  .stale { margin-top: -13px; line-height: 28px; font-size: 19.5px; color: #730000; margin-left: 1px; }
  .ver { margin-top: 29px; line-height: 22px; font-size: 16.5px; color: #505050; margin-left: 1px; }
  section { margin-left: -170px; width: 387px; border: 1px solid #7e7e7e; border-radius: 8px; padding-left: 174px; }
  section h3 { font-weight: 600; font-size: 20.7px; line-height: 28px; }
  .c1 { margin-top: 87px; height: 179px; padding-top: 12px; }
  .c1 h3 { margin-left: -15px; }
  .bl { margin-top: 15px; height: 26px; display: flex; gap: 12px; }
  .c1 h3 + .bl { margin-top: 11px; }
  .c1 .bl + .bl { margin-top: 14.5px; }
  .bg { height: 26px; border-radius: 4px; padding: 0 5px; font-size: 16.5px; display: flex; align-items: center; border: 1px solid; }
  .g { background: #466d46; border-color: #2a5a2a; color: #a3ada3; margin-left: -5px; }
  .p { background: #655a80; border-color: #4d4070; color: #a6a1b2; }
  .y { background: #938c69; border-color: #666; color: #151515; margin-left: -8px; }
  .b { background: #2d5578; border-color: #1d456b; color: #a3adb5; margin-left: -7px; }
  .c2 { margin-top: 36px; height: 109px; padding-top: 10px; }
  .c2 h3 { margin-left: -4px; }
  .c2 p { margin-top: 10px; line-height: 22.5px; margin-left: -1px; }
  .pull { margin-left: -6px; }
  .pull8 { margin-left: -7px; }
  .pull9 { margin-left: -9px; }
  .c3 { margin-top: 35px; height: 243px; padding-top: 10px; }
  .c3 p { margin-top: 35px; line-height: 22.7px; }
  .c3 b, .c4 b { color: #111; }
  .nudge { margin-left: 2px; }
  .nudge2 { margin-left: 4px; }
  .pos { margin-top: 30px; height: 28px; display: flex; align-items: center; }
  .pos span:first-child { margin-left: -7px; width: 21px; }
  .pos .radio { margin-right: 10px; }
  .c4 { margin-top: 36px; height: 250px; padding-top: 10px; }
  .c4 p { margin-top: 10px; line-height: 22.7px; }
  kbd { display: inline-block; font: 14px/20px 'Open Sans', sans-serif; background: #3f4449; color: #a2a5a8; border-radius: 6px; padding: 0 5px; height: 21px; margin: -3px 0; vertical-align: -1px; }
  .c4 p:first-of-type { margin-left: -1px; }
  .c4 .hd { margin-top: 11px; }
  .c4 .ata { margin: 33px 0 0 -8px; color: #000050; }

  .vbar { width: 24px; background: #f1f1f1; display: flex; flex-direction: column; align-items: center; }
  .up, .down, .la, .ra { width: 0; height: 0; border: 6px solid transparent; flex: none; }
  .up { border-bottom: 7px solid #a3a3a3; border-top: 0; margin-top: 10px; }
  .down { border-top: 7px solid #505050; border-bottom: 0; margin-top: auto; margin-bottom: 9px; }
  .vbar .thumb { width: 21px; height: 300px; margin-top: 8px; background: #c1c1c1; }
  .hbar { height: 25px; flex: none; background: #f1f1f1; display: flex; align-items: center; }
  .la { border-right: 7px solid #a3a3a3; border-left: 0; margin: 0 10px 0 8px; }
  .ra { border-left: 7px solid #505050; border-right: 0; margin: 0 auto 0 15px; }
  .hbar .thumb { width: 2481px; height: 21px; background: #c1c1c1; }
  .corner { width: 24px; height: 25px; background: #dcdcdc; }

  footer { flex: 1; border-top: 2px solid #444; background: linear-gradient(90deg, #18271f, #1c231f 40%, #1b241f 60%, #16281f 85%, #1d2320); display: flex; justify-content: space-between; }
  .icons { margin-left: 818px; display: flex; padding-bottom: 1px; }
  .icons > div { width: 66.05px; display: flex; align-items: center; justify-content: center; position: relative; }
  .run::after { content: ''; position: absolute; bottom: 6px; width: 9px; height: 5px; border-radius: 3px; background: #9a9f9c; }
  .cur::before { content: ''; position: absolute; inset: 3px 4px 5px; border-radius: 6px; background: #2c3531; border: 1px solid #36403b; }
  .cur svg { position: relative; }
  .cur::after { content: ''; position: absolute; bottom: 6px; width: 24px; height: 5px; border-radius: 3px; background: #6fd3d8; }
  .badge { position: absolute; left: 35px; top: 8px; width: 24px; height: 24px; border-radius: 50%; background: #5c6bc0; color: #c9d0f0; font: 500 16px/24px Roboto, sans-serif; text-align: center; }
  .tray { display: flex; align-items: center; color: #fff; font-size: 17.6px; line-height: 23px; letter-spacing: -.1px; padding-bottom: 3px; }
  .lang { width: 66px; margin: 0 10px 0 16px; text-align: center; }
  .wifi { margin-right: 10px; }
  .vol { margin-right: 12px; }
  .clock { width: 98px; margin: 0 29px 0 20px; text-align: right; line-height: 24px; }

  .dialog { position: absolute; left: 661px; top: 155px; width: 1215px; height: 1167px; background: #fff; border: 1px solid #c5c5c5; border-radius: 5px; padding: 3px 4px 0; display: flex; flex-direction: column; color: #3c3c3c; }
  .title { height: 50px; flex: none; border: 1px solid #ddd; border-radius: 5px; background: #e9e9e9; display: flex; align-items: center; padding-left: 21px; color: #008000; font-weight: 700; font-size: 20.95px; }
  .close { width: 30px; height: 30px; margin: 0 6px 0 auto; border: 1px solid #c5c5c5; border-radius: 5px; background: #f6f6f6; display: flex; align-items: center; justify-content: center; }
  .scroll { height: 1014px; flex: none; display: flex; overflow: hidden; }
  .body { flex: 1; padding: 18px 0 0 19px; }
  .desc { font-size: 17.98px; line-height: 21.6px; }
  .rule { height: 1px; width: 1141px; margin-top: 14px; background: #c5c5c5; }
  .choose { margin: 17px 0 0 2px; height: 28px; display: flex; align-items: center; font: 19.6px/28px Verdana, 'DejaVu Sans', sans-serif; color: #777; }
  .choose b { font-size: 19.4px; }
  .choose .fld { color: #008000; margin: 0 8px 0 13px; letter-spacing: .58px; }
  .choose span { color: #008000; letter-spacing: .05px; }
  .method { display: flex; }
  .m1 { margin-top: 26px; }
  .pick { width: 59px; flex: none; display: flex; align-items: flex-start; }
  .mhead { height: 28px; display: flex; align-items: center; }
  .mhead b { font: 700 19.5px/28px Verdana, 'DejaVu Sans', sans-serif; color: #800000; width: 436px; }
  .m1 .mhead b { letter-spacing: -.13px; }
  .focus { display: flex; width: 24px; height: 24px; margin: -3px 0 0 5px; background: #bfdcff; align-items: center; justify-content: center; }
  .focus .radio { background-color: #fff; outline: 2px solid #e8f2ff; }
  .radio { display: inline-block; width: 18px; height: 18px; border-radius: 50%; border: 2px solid #0075ff; background: radial-gradient(circle, #0075ff 5px, #fff 5.800px); }
  .radio.off { border: 1.500px solid #767676; background: #fff; margin: 3px 0 0 8px; }
  .radio.dark { border-color: #004699; background: radial-gradient(circle, #004699 5px, #999 5.800px); }
  .how { font-size: 17.7px; color: #8a8a8a; width: 105px; margin-top: 2px; }
  .btn { height: 25px; margin-top: 2px; border: 1px solid; border-radius: 4px; display: flex; align-items: center; padding: 0 5px; font-size: 16.5px; }
  .bgray { background: #e2e2e2; border-color: #aaa; color: #1f4fa0; width: 151px; margin-right: 12px; }
  .bgreen { background: #73ae73; border-color: #4d954d; color: #fff; width: 161px; margin-right: 13px; }
  .bblue { background: #4f8cc0; border-color: #337ab7; color: #fff; width: 171px; height: 27px; }
  .box { margin-top: 7px; width: 1065px; height: 220px; border: 1px solid #ccc; background: #fafafa; padding: 13px 0 0 15px; color: #444; }
  .only { line-height: 26px; }
  .area { width: 1010px; height: 98px; margin: 4px 0 0 1px; border: 1px solid #555; border-radius: 4px; background: #fff; display: flex; align-items: flex-end; justify-content: flex-end; }
  .clear { width: 997px; margin-top: 13px; line-height: 22px; text-align: right; font-size: 15.8px; }
  .clear a { color: #000066; }
  .test { margin-top: 3px; height: 30px; display: flex; align-items: center; font: 16.5px 'Liberation Sans', Arial, sans-serif; color: #666; }
  .select { width: 188px; height: 30px; margin-left: 8px; border: 1px solid #bbb; border-radius: 4px; background: #fff; color: #111; font: 16.4px 'Open Sans', sans-serif; display: flex; align-items: center; justify-content: space-between; padding: 1px 7px 0 9px; }
  .or { margin-top: 36px; line-height: 28px; font-weight: 700; font-size: 19.5px; color: #777; }
  .m2 { margin-top: 35px; }
  .box2 { margin-top: 4px; width: 1081px; height: 420px; border: 1px solid #eee; background: #fdfdfd; display: flex; color: #c0c0c0; line-height: 26.5px; }
  .ch { width: 429px; margin: 47px 0 0 18px; display: flex; flex-direction: column; }
  .drop2 { height: 226px; width: 429px; border: 1px solid #d8d8d8; background: #fff; }
  .mid { width: 106px; margin-top: 106px; display: flex; flex-direction: column; align-items: center; text-align: center; color: #b0dab0; font-size: 16.5px; line-height: 23px; }
  .mid b { margin: 28px 0 30px; }
  .rt { margin-top: 16px; display: flex; flex-direction: column; }
  .rt span { display: flex; align-items: center; }
  .rt .drop2 { margin-top: 1px; }
  .r { width: 18px; height: 18px; border: 1px solid #eaeaea; border-radius: 50%; margin: -6px 6px 0 0; }
  .r.on { background: radial-gradient(circle, #ececec 5px, #fff 5.800px); }
  .dbar { width: 25px; background: #f1f1f1; display: flex; flex-direction: column; align-items: center; }
  .dbar .thumb { width: 21px; height: 937px; margin-top: 8px; background: #c1c1c1; }
  .foot { margin-top: 11px; border-top: 1px solid #ddd; display: flex; justify-content: flex-end; gap: 9px; padding: 16px 30px 0 0; }
  .foot span { width: 108px; height: 45px; border: 1px solid #c5c5c5; border-radius: 4px; background: #e6e6e6; text-align: center; font-size: 20.8px; line-height: 43px; color: #454545; }
  .foot .save { width: 92px; font-weight: 700; color: #333; }
</style>
